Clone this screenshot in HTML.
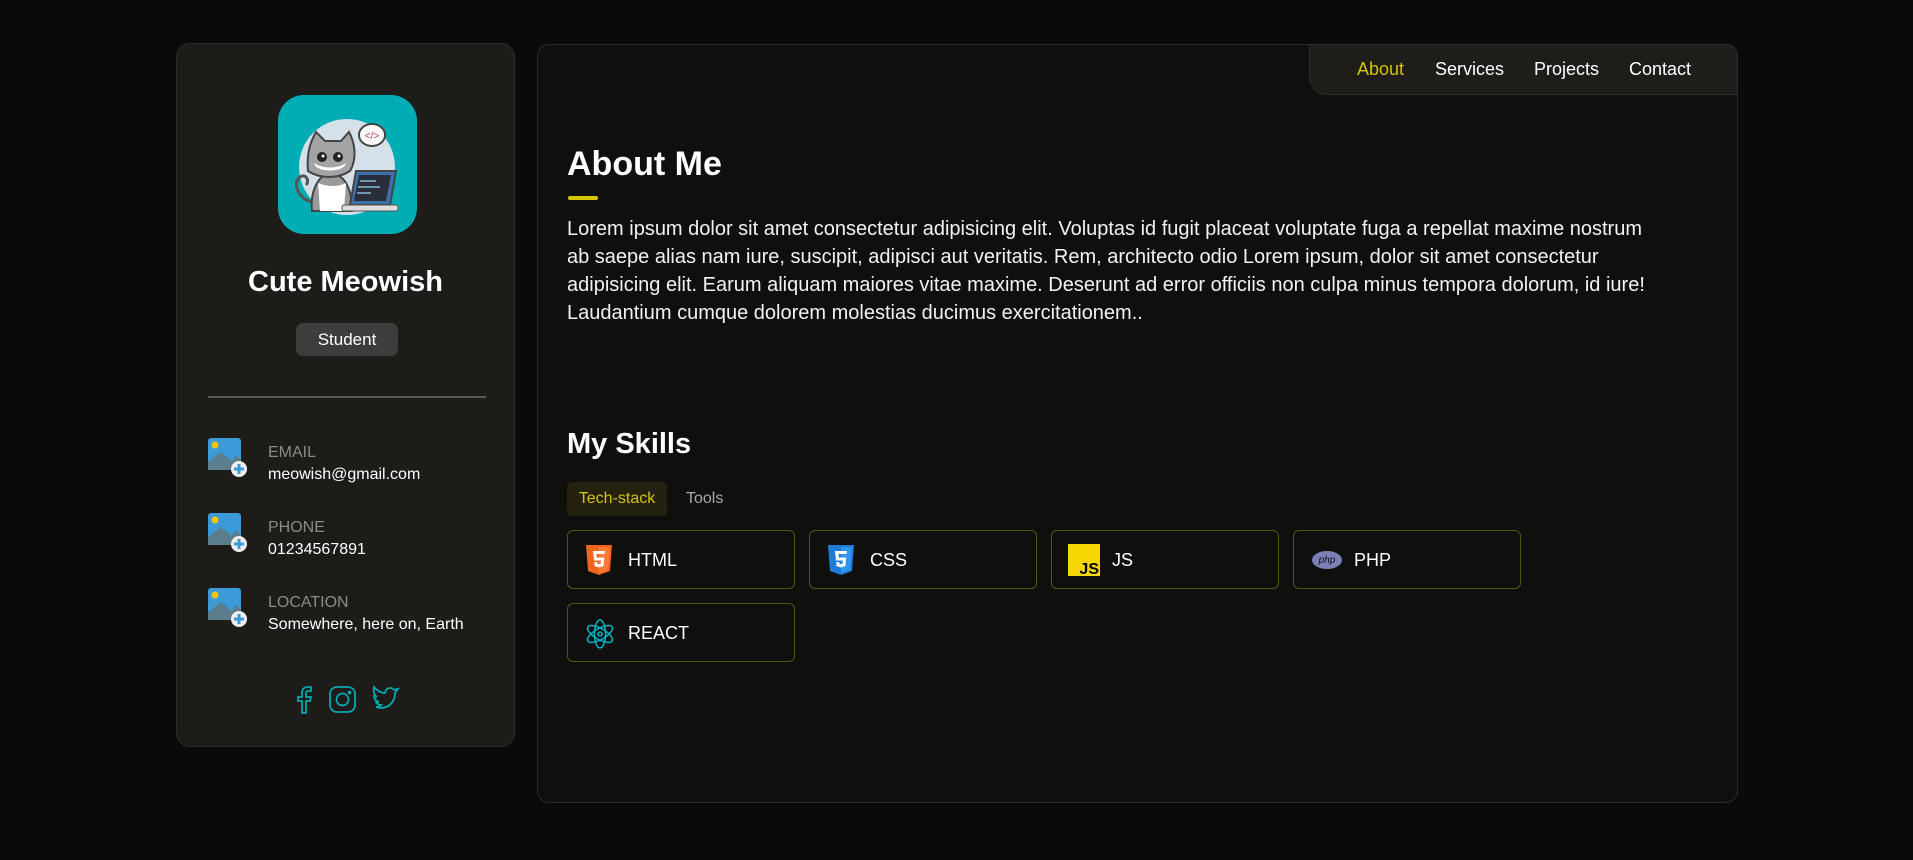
<!DOCTYPE html>
<html><head><meta charset="utf-8"><style>
*{margin:0;padding:0;box-sizing:border-box}
body{width:1913px;height:860px;background:#0a0a0a;font-family:"Liberation Sans",Arial,sans-serif;color:#fff;position:relative;overflow:hidden}
.side{position:absolute;left:176px;top:43px;width:339px;height:704px;background:#1e1c18;border:1px solid #2e2d2a;border-radius:14px}
.av{position:absolute;left:101px;top:51px;width:139px;height:139px;border-radius:26px;background:#00adb5;overflow:hidden}
.name{position:absolute;left:0;width:100%;top:222px;text-align:center;font-size:29px;font-weight:bold}
.badge{position:absolute;left:119px;top:279px;width:102px;height:33px;background:#3d3d3b;border-radius:7px;font-size:17px;text-align:center;line-height:33px}
.hr{position:absolute;left:31px;top:352px;width:278px;height:2px;background:#5a5a58}
.ci{position:absolute;left:31px;width:40px;height:40px}
.lab{position:absolute;left:91px;font-size:16px;color:#8a8a88}
.val{position:absolute;left:91px;font-size:16px;color:#fff}
.main{position:absolute;left:537px;top:44px;width:1201px;height:759px;background:#0f0f0e;border:1px solid #2a2a28;border-radius:12px}
.nav{position:absolute;right:-1px;top:-1px;width:429px;height:51px;background:#1e1d1a;border:1px solid #2e2d2a;border-radius:0 12px 0 18px}
.nav span{position:absolute;top:14px;font-size:18px}
h2{position:absolute;left:29px;font-weight:bold}
.ul{position:absolute;left:30px;top:151px;width:30px;height:4px;border-radius:2px;background:#d8c600}
p{position:absolute;left:29px;top:170px;width:1090px;font-size:20px;line-height:28px;color:#f2f2f2}
.tab{position:absolute;top:437px;height:34px;font-size:16px;line-height:34px;border-radius:5px}
.card{position:absolute;width:228px;height:59px;border:1px solid #5a5410;border-radius:6px}
.card svg{position:absolute;left:17px;top:14px}
.card span{position:absolute;left:60px;top:19px;font-size:18px}
</style></head><body>
<div class="side">
 <div class="av"><svg width="139" height="139" viewBox="0 0 139 139">
  <circle cx="69" cy="72" r="48" fill="#d6e0ea"/>
  <path d="M38 108 C20 106 14 88 22 82 C28 78 32 86 28 90" fill="none" stroke="#555" stroke-width="3"/>
  <path d="M34 116 C32 96 40 82 50 78 C66 78 74 92 74 116Z" fill="#9a9a9c" stroke="#444" stroke-width="2"/>
  <path d="M40 88 C50 92 60 92 68 88 L66 116 L42 116Z" fill="#fff"/>
  <path d="M30 76 C28 56 34 44 38 37 L47 46 L63 46 L71 37 C76 46 80 62 72 76 C60 84 42 84 30 76Z" fill="#a4a4a6" stroke="#444" stroke-width="2"/>
  <path d="M36 68 C44 74 60 74 68 68 C66 78 38 78 36 68Z" fill="#fff"/>
  <circle cx="44" cy="62" r="5" fill="#222"/><circle cx="60" cy="62" r="5" fill="#222"/>
  <circle cx="45" cy="61" r="1.5" fill="#fff"/><circle cx="61" cy="61" r="1.5" fill="#fff"/>
  <path d="M78 76 L118 76 L112 110 L72 110Z" fill="#3d6fa8" stroke="#444" stroke-width="2"/>
  <path d="M81 80 L113 80 L108 106 L76 106Z" fill="#2a2d3a"/>
  <path d="M82 86h16M80 92h22M79 98h14" stroke="#8bd" stroke-width="1.5"/>
  <rect x="64" y="110" width="56" height="6" rx="2" fill="#ddd" stroke="#555"/>
  <ellipse cx="94" cy="40" rx="13" ry="11" fill="#fff" stroke="#444" stroke-width="2"/>
  <text x="94" y="44" font-size="10" text-anchor="middle" fill="#d0306a" font-family="Liberation Sans">&lt;/&gt;</text>
 </svg></div>
 <div class="name">Cute Meowish</div>
 <div class="badge">Student</div>
 <div class="hr"></div>
 <svg class="ci" style="top:394px" viewBox="0 0 40 40"><rect x="0" y="0" width="33" height="32" rx="3" fill="#3d9ad8"/><circle cx="7" cy="7" r="3.5" fill="#f6c500"/><path d="M0 32 L0 24 L13 14 L24 23 L28 17 L33 22 L33 32Z" fill="#5c7d8c"/><circle cx="31" cy="31" r="8" fill="#eee"/><path d="M31 26v10M26 31h10" stroke="#3d9ad8" stroke-width="3"/></svg>
 <div class="lab" style="top:400px">EMAIL</div><div class="val" style="top:422px">meowish@gmail.com</div>
 <svg class="ci" style="top:469px" viewBox="0 0 40 40"><rect x="0" y="0" width="33" height="32" rx="3" fill="#3d9ad8"/><circle cx="7" cy="7" r="3.5" fill="#f6c500"/><path d="M0 32 L0 24 L13 14 L24 23 L28 17 L33 22 L33 32Z" fill="#5c7d8c"/><circle cx="31" cy="31" r="8" fill="#eee"/><path d="M31 26v10M26 31h10" stroke="#3d9ad8" stroke-width="3"/></svg>
 <div class="lab" style="top:475px">PHONE</div><div class="val" style="top:497px">01234567891</div>
 <svg class="ci" style="top:544px" viewBox="0 0 40 40"><rect x="0" y="0" width="33" height="32" rx="3" fill="#3d9ad8"/><circle cx="7" cy="7" r="3.5" fill="#f6c500"/><path d="M0 32 L0 24 L13 14 L24 23 L28 17 L33 22 L33 32Z" fill="#5c7d8c"/><circle cx="31" cy="31" r="8" fill="#eee"/><path d="M31 26v10M26 31h10" stroke="#3d9ad8" stroke-width="3"/></svg>
 <div class="lab" style="top:550px">LOCATION</div><div class="val" style="top:572px">Somewhere, here on, Earth</div>
 <svg style="position:absolute;left:112px;top:641px" width="120" height="30" viewBox="0 0 120 30" fill="none" stroke="#00a8b0" stroke-width="1.8">
  <path d="M13 28V16H9V12H13V8C13 4 15 2 19 2H22V6H19C17.5 6 17 7 17 8V12H22L21 16H17V28Z"/>
  <rect x="41" y="2" width="25" height="25" rx="7"/><circle cx="53.5" cy="14.5" r="6"/><circle cx="60.5" cy="7.5" r="1"/>
  <path d="M87 22C92 24 100 23 104 16C106 12 106 9 106 8L109 4L105 5C103 2 97 2 96 8C91 8 88 5 85 2C84 6 85 10 88 12L85 11C85 14 87 16 90 17H87C88 19 90 20 92 20C90 22 88 22 87 22Z"/>
 </svg>
</div>
<div class="main">
 <div class="nav"><span style="left:47px;color:#d4c400">About</span><span style="left:125px">Services</span><span style="left:224px">Projects</span><span style="left:319px">Contact</span></div>
 <h2 style="top:100px;font-size:34px">About Me</h2>
 <div class="ul"></div>
 <p>Lorem ipsum dolor sit amet consectetur adipisicing elit. Voluptas id fugit placeat voluptate fuga a repellat maxime nostrum ab saepe alias nam iure, suscipit, adipisci aut veritatis. Rem, architecto odio Lorem ipsum, dolor sit amet consectetur adipisicing elit. Earum aliquam maiores vitae maxime. Deserunt ad error officiis non culpa minus tempora dolorum, id iure! Laudantium cumque dolorem molestias ducimus exercitationem..</p>
 <h2 style="top:383px;font-size:29px">My Skills</h2>
 <div class="tab" style="left:29px;width:100px;background:#24220e;color:#d4c400;text-align:center">Tech-stack</div>
 <div class="tab" style="left:148px;color:#aaa">Tools</div>
 <div class="card" style="left:29px;top:485px"><svg width="28" height="30" viewBox="0 0 28 30"><path d="M1 0H27L25 26L14 30L3 26Z" fill="#f0641f"/><path d="M14 2V28L23 25L25 2Z" fill="#ff7a33"/><path d="M8 6H20L19.6 9H11.5L11.8 12.5H19.3L18.5 21L14 22.5L9.5 21L9.2 17H12.2L12.4 18.6L14 19.2L15.7 18.6L16 15.5H9Z" fill="#fff"/></svg><span>HTML</span></div>
 <div class="card" style="left:271px;top:485px"><svg width="28" height="30" viewBox="0 0 28 30"><path d="M1 0H27L25 26L14 30L3 26Z" fill="#1f7bd8"/><path d="M14 2V28L23 25L25 2Z" fill="#2f95ee"/><path d="M8 6H20L19.5 9H11.5L11.8 12.5H19.2L18.5 21L14 22.5L9.5 21L9.2 17H12.2L12.4 18.6L14 19.2L15.7 18.6L16 15.5H9Z" fill="#fff"/></svg><span>CSS</span></div>
 <div class="card" style="left:513px;top:485px"><svg width="32" height="32" viewBox="0 0 32 32" style="left:16px;top:13px"><rect width="32" height="32" fill="#f5d800"/><text x="31" y="30" font-size="16" font-weight="bold" text-anchor="end" font-family="Liberation Sans">JS</text></svg><span style="left:60px">JS</span></div>
 <div class="card" style="left:755px;top:485px"><svg width="32" height="22" viewBox="0 0 32 22" style="top:18px"><ellipse cx="16" cy="11" rx="15" ry="9" fill="#7b7fb5"/><text x="16" y="14" font-size="10" font-style="italic" text-anchor="middle" fill="#111" font-family="Liberation Sans">php</text></svg><span>PHP</span></div>
 <div class="card" style="left:29px;top:558px"><svg width="30" height="32" viewBox="0 0 30 32" fill="none" stroke="#00b8c8" stroke-width="1.5"><ellipse cx="15" cy="16" rx="5.5" ry="14"/><ellipse cx="15" cy="16" rx="5.5" ry="14" transform="rotate(60 15 16)"/><ellipse cx="15" cy="16" rx="5.5" ry="14" transform="rotate(-60 15 16)"/><circle cx="15" cy="16" r="2"/></svg><span>REACT</span></div>
</div>
</body></html>
